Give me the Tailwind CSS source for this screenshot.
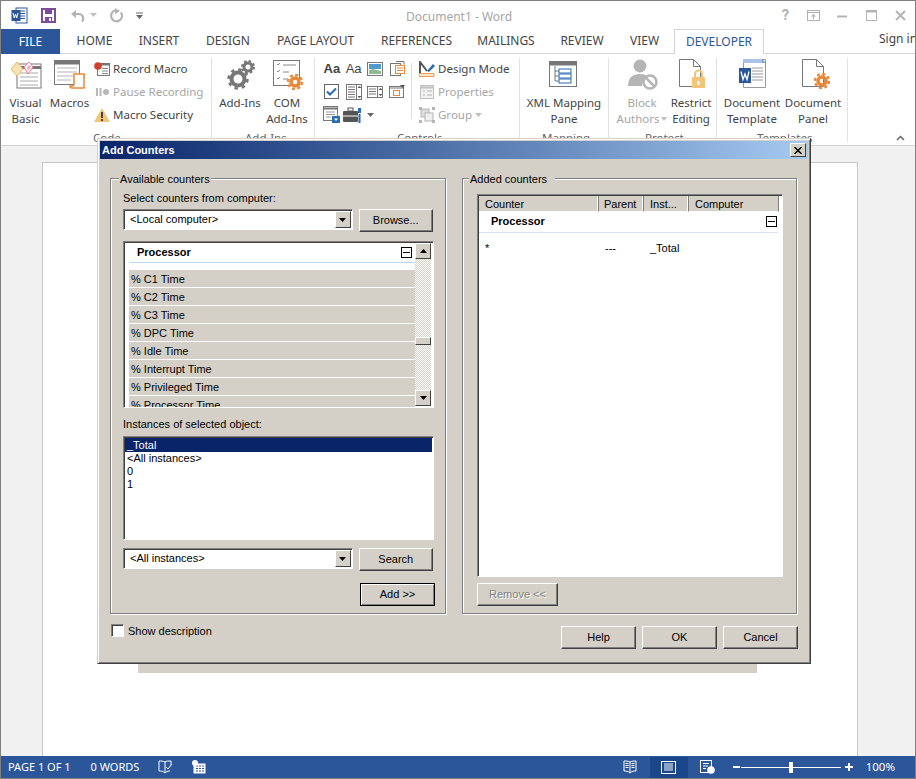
<!doctype html>
<html lang="en">
<head>
<meta charset="UTF-8">
<script src="https://cdn.jsdelivr.net/npm/@tailwindcss/browser@4"></script>
<title>Document1 - Word</title>
</head>
<body class="bg-white">
<div class="relative w-[916px] h-[779px] overflow-hidden flex flex-col border border-[#808080] font-['Roboto',sans-serif] text-[12px] text-[#444]">

  <!-- title bar -->
  <div class="h-[28px] flex items-center shrink-0 relative">
    <svg class="ml-[10px]" width="17" height="17" viewBox="0 0 17 17"><rect x="5" y="1" width="11" height="15" fill="#fff" stroke="#2b579a"/><path d="M9 4h5M9 6.500h5M9 9h5M9 11.500h5" stroke="#2b579a"/><rect x="0.500" y="3" width="9" height="11" fill="#2b579a"/><path d="M2 6l1.300 5 1.200-4 1.200 4L7 6" fill="none" stroke="#fff"/></svg>
    <svg class="ml-[13px]" width="15" height="15" viewBox="0 0 15 15"><rect x="1" y="1" width="13" height="13" fill="none" stroke="#7d4a9c" stroke-width="2"/><rect x="4" y="2" width="7" height="4" fill="#7d4a9c"/><rect x="4" y="9" width="7" height="5" fill="#7d4a9c"/><rect x="8" y="10" width="2" height="3" fill="#fff"/></svg>
    <svg class="ml-[14px]" width="16" height="15" viewBox="0 0 16 15"><path d="M2 6h7a4.500 4.500 0 0 1 3 7.500" fill="none" stroke="#b4b4b4" stroke-width="2.200"/><path d="M1 6l5-4v8z" fill="#b4b4b4"/></svg>
    <svg class="ml-[4px]" width="7" height="4" viewBox="0 0 7 4"><path d="M0 0h7L3.500 4z" fill="#c0c0c0"/></svg>
    <svg class="ml-[12px]" width="15" height="15" viewBox="0 0 15 15"><path d="M6 2.500a5.500 5.500 0 1 0 6 2" fill="none" stroke="#b4b4b4" stroke-width="2.200"/><path d="M6 0v6l5-3z" fill="#b4b4b4"/></svg>
    <svg class="ml-[12px]" width="7" height="7" viewBox="0 0 7 7"><path d="M0 1h7" stroke="#666"/><path d="M0 3h7L3.500 7z" fill="#666"/></svg>
    <span class="absolute left-[405px] top-[7px] text-[#a6a6a6] font-['Noto_Sans']">Document1 - Word</span>
    <div class="ml-auto mr-[9px] flex items-center gap-[14px]">
      <span class="w-[15px] text-center text-[15px] font-bold text-[#b4b4b4]">?</span>
      <svg width="13" height="11" viewBox="0 0 13 11"><rect x="0.500" y="0.500" width="12" height="10" fill="none" stroke="#b0b0b0"/><path d="M0 2.500h13" stroke="#b0b0b0"/><path d="M6.500 4l2.500 2.500H7V9H6V6.500H4z" fill="#b0b0b0"/></svg>
      <svg class="ml-[3px]" width="10" height="10" viewBox="0 0 10 10"><path d="M0 6.500h10" stroke="#b4b4b4" stroke-width="2"/></svg>
      <svg class="ml-[5px]" width="11" height="11" viewBox="0 0 11 11"><rect x="0.500" y="0.500" width="10" height="10" fill="none" stroke="#b4b4b4"/><path d="M0 1.500h11" stroke="#b4b4b4" stroke-width="2"/></svg>
      <svg class="ml-[4px]" width="11" height="11" viewBox="0 0 11 11"><path d="M1 1l9 9M10 1l-9 9" stroke="#b4b4b4" stroke-width="2"/></svg>
    </div>
  </div>

  <!-- tabs -->
  <div class="h-[25px] flex shrink-0 border-b border-[#d4d4d4] font-['Noto_Sans'] text-[#444] text-[12px]">
    <div class="w-[59px] h-[25px] bg-[#2b579a] text-white flex items-center justify-center">FILE</div>
    <div class="w-[69px] flex items-center justify-center">HOME</div>
    <div class="w-[60px] flex items-center justify-center">INSERT</div>
    <div class="w-[78px] flex items-center justify-center">DESIGN</div>
    <div class="w-[97px] flex items-center justify-center">PAGE LAYOUT</div>
    <div class="w-[105px] flex items-center justify-center">REFERENCES</div>
    <div class="w-[74px] flex items-center justify-center">MAILINGS</div>
    <div class="w-[78px] flex items-center justify-center">REVIEW</div>
    <div class="w-[47px] flex items-center justify-center">VIEW</div>
    <div class="ml-[6px] w-[90px] h-[25px] bg-white border border-b-0 border-[#d4d4d4] text-[#2b579a] flex items-center justify-center">DEVELOPER</div>
    <div class="ml-auto pb-[5px] self-center whitespace-nowrap w-[36px] overflow-hidden">Sign in</div>
  </div>

  <!-- ribbon -->
  <div class="h-[92px] flex shrink-0 border-b border-[#d4d4d4] relative font-['Noto_Sans'] text-[11.5px] leading-[16px]">
    <!-- Code -->
    <div class="w-[211px] h-[84px] mt-[4px] border-r border-[#e1e1e1] flex">
      <div class="w-[49px] flex flex-col items-center">
        <svg class="mt-[1px]" width="32" height="30" viewBox="0 0 32 30"><rect x="7" y="5" width="24" height="24" fill="#fff" stroke="#777"/><path d="M7 8.500h24" stroke="#777" stroke-width="3"/><path d="M10 14h18M10 18h18M10 22h18M10 26h18" stroke="#aaa"/><path d="M1 10l6-7 6 7-6 7z" fill="#f8e3b4" stroke="#e8b864"/><path d="M14 8l5-5 4 5-5 7z" fill="#fff" stroke="#e57a98"/><path d="M17 8l2-2 2 2-3 4z" fill="#f3a9bc"/></svg>
        <div class="mt-[6px] text-center">Visual<br>Basic</div>
      </div>
      <div class="w-[39px] flex flex-col items-center">
        <svg class="mt-[1px]" width="32" height="30" viewBox="0 0 32 30"><rect x="0.500" y="1.500" width="25" height="24" fill="#fff" stroke="#777"/><path d="M0 3.500h26" stroke="#777" stroke-width="4"/><path d="M3 9h20M3 13h20M3 17h20M3 21h14" stroke="#b5b5b5"/><path d="M20 15h10v14H18c-1 0-2-1-2-2h3c1 0 1-1 1-2z" fill="#fff" stroke="#e8893a" stroke-width="1.500"/><path d="M30 15c1 0 1 3 0 3" fill="none" stroke="#e8893a"/></svg>
        <div class="mt-[6px] text-center whitespace-nowrap">Macros</div>
      </div>
      <div class="flex flex-col ml-[5px] -mt-[1px]">
        <div class="h-[23px] flex items-center gap-[3px]">
          <svg width="16" height="16" viewBox="0 0 16 16"><rect x="3.500" y="2.500" width="12" height="12" fill="#fff" stroke="#777"/><path d="M3 3.500h13" stroke="#777" stroke-width="2"/><path d="M8 7.500h6M8 10h6M8 12.500h6" stroke="#888"/><circle cx="4" cy="5" r="3.800" fill="#d0402a"/></svg>
          <span>Record Macro</span>
        </div>
        <div class="h-[23px] flex items-center gap-[3px] text-[#a6a6a6]">
          <svg width="16" height="16" viewBox="0 0 16 16"><path d="M2 4h2v8H2zM5.500 4h2v8h-2z" fill="#b8b8b8"/><circle cx="12" cy="8" r="3" fill="#b8b8b8"/></svg>
          <span>Pause Recording</span>
        </div>
        <div class="h-[23px] flex items-center gap-[3px]">
          <svg width="16" height="16" viewBox="0 0 16 16"><path d="M8 1l8 14H0z" fill="#f2c679"/><path d="M7 5h2v6H7zM7 12h2v2H7z" fill="#444"/></svg>
          <span>Macro Security</span>
        </div>
      </div>
    </div>
    <!-- Add-Ins -->
    <div class="w-[103px] h-[84px] mt-[4px] border-r border-[#e1e1e1] flex">
      <div class="w-[56px] flex flex-col items-center">
        <svg class="mt-[2px] ml-[1px]" width="28" height="30" viewBox="0 0 28 30"><circle cx="11" cy="19" r="6.500" fill="none" stroke="#777" stroke-width="4"/><circle cx="11" cy="19" r="9.500" fill="none" stroke="#777" stroke-width="2.500" stroke-dasharray="3.500 3.950"/><circle cx="21" cy="7" r="4" fill="none" stroke="#777" stroke-width="3"/><circle cx="21" cy="7" r="6" fill="none" stroke="#777" stroke-width="2" stroke-dasharray="2.500 2.200"/></svg>
        <div class="mt-[5px] text-center whitespace-nowrap">Add-Ins</div>
      </div>
      <div class="w-[38px] flex flex-col items-center">
        <svg class="mt-[1px]" width="32" height="31" viewBox="0 0 32 31"><rect x="2.500" y="1.500" width="26" height="25" fill="#fff" stroke="#777"/><path d="M6 5l1 1 2-2M6 12l1 1 2-2M6 19l1 1 2-2" fill="none" stroke="#888"/><path d="M12 6h13M12 13h6M12 20h5" stroke="#888"/><circle cx="24" cy="23" r="4" fill="none" stroke="#e8893a" stroke-width="3.500"/><circle cx="24" cy="23" r="7" fill="none" stroke="#e8893a" stroke-width="2.500" stroke-dasharray="3 2.500"/></svg>
        <div class="mt-[5px] text-center whitespace-nowrap">COM<br>Add-Ins</div>
      </div>
    </div>
    <!-- Controls -->
    <div class="w-[205px] h-[84px] mt-[4px] border-r border-[#e1e1e1] flex">
      <div class="w-[87px] grid grid-cols-4 grid-rows-3 ml-[6px] -mt-[1px] h-[69px] items-center justify-items-center">
        <span class="text-[13px] font-['Liberation_Sans'] font-bold">Aa</span>
        <span class="text-[13px] font-['Liberation_Sans']">Aa</span>
        <svg width="16" height="14" viewBox="0 0 16 14"><rect x="0.500" y="0.500" width="15" height="13" fill="#fff" stroke="#777"/><rect x="2" y="2" width="12" height="5" fill="#4f9ac8"/><path d="M2 12V8l4-1 8 2v3z" fill="#8fb98f"/></svg>
        <svg width="15" height="15" viewBox="0 0 15 15"><rect x="0.500" y="2.500" width="10" height="12" fill="#fff" stroke="#777"/><rect x="5.500" y="4.500" width="9" height="8" fill="#fff" stroke="#e8893a"/><path d="M7 7h6M7 9.500h6" stroke="#e8893a"/><path d="M6 0.500h8v3" fill="none" stroke="#777"/></svg>
        <svg width="15" height="15" viewBox="0 0 15 15"><rect x="0.500" y="0.500" width="14" height="14" fill="#fff" stroke="#666"/><path d="M3 7.500l3 3 6-6" fill="none" stroke="#2b6cb0" stroke-width="2"/></svg>
        <svg width="16" height="16" viewBox="0 0 16 16"><rect x="0.500" y="0.500" width="15" height="15" fill="#fff" stroke="#777"/><path d="M2 3h7M2 5.500h7M2 8h7M2 10.500h7M2 13h7" stroke="#777"/><path d="M10.500 0v16" stroke="#777"/><path d="M11.500 4l2-2 2 2zM11.500 12l2 2 2-2z" fill="#555"/></svg>
        <svg width="16" height="12" viewBox="0 0 16 12"><rect x="0.500" y="0.500" width="15" height="11" fill="#fff" stroke="#777"/><path d="M2 3h7M2 5.500h7M2 8h7" stroke="#777"/><path d="M10.500 0v12" stroke="#777"/><path d="M11.500 4l2-2 2 2zM11.500 8l2 2 2-2z" fill="#555"/></svg>
        <svg width="16" height="13" viewBox="0 0 16 13"><rect x="0.500" y="1.500" width="14" height="11" fill="#fff" stroke="#777"/><path d="M0 3h15" stroke="#777"/><rect x="4.500" y="5.500" width="6" height="5" fill="none" stroke="#e8893a"/><path d="M11 0h5l-2.500 3z" fill="#555"/></svg>
        <svg width="17" height="17" viewBox="0 0 17 17"><rect x="0.500" y="0.500" width="14" height="14" fill="#fff" stroke="#777"/><path d="M0 2.500h15" stroke="#777" stroke-width="2"/><path d="M3 6h9M3 8.500h9M3 11h5" stroke="#999"/><rect x="9" y="10" width="8" height="7" fill="#2b6cb0"/><path d="M11 12.500h4l-2 2.500z" fill="#fff"/></svg>
        <svg width="21" height="16" viewBox="0 0 21 16"><rect x="0" y="4" width="15" height="11" rx="1" fill="#555"/><rect x="5" y="1" width="5" height="3" fill="none" stroke="#555"/><path d="M0 9h15" stroke="#fff"/><rect x="15" y="1" width="3" height="5" fill="#2b6cb0"/><rect x="15.500" y="7" width="2" height="9" fill="#2b6cb0"/></svg>
        <svg class="-ml-[10px]" width="7" height="4" viewBox="0 0 7 4"><path d="M0 0h7L3.500 4z" fill="#666"/></svg>
      </div>
      <div class="w-px h-[56px] mt-[5px] ml-[3px] bg-[#dcdcdc]"></div>
      <div class="flex flex-col ml-[7px] -mt-[1px]">
        <div class="h-[23px] flex items-center gap-[3px] whitespace-nowrap">
          <svg width="16" height="16" viewBox="0 0 16 16"><path d="M1 12V1l7 9" fill="none" stroke="#555" stroke-width="2"/><path d="M8 10l6-7 2 2-6 6z" fill="#2b6cb0"/><path d="M0 12.500h15v3H0z" fill="#fbe5c8" stroke="#e8893a" stroke-width="0.800"/></svg>
          <span>Design Mode</span>
        </div>
        <div class="h-[23px] flex items-center gap-[3px] text-[#a6a6a6]">
          <svg width="16" height="16" viewBox="0 0 16 16"><rect x="1.500" y="1.500" width="13" height="13" fill="#f1f1f1" stroke="#c0c0c0"/><path d="M1 3.500h14" stroke="#c0c0c0" stroke-width="2"/><path d="M4 7h2M8 7h5M4 11h2M8 11h5" stroke="#b5b5b5"/></svg>
          <span>Properties</span>
        </div>
        <div class="h-[23px] flex items-center gap-[3px] text-[#a6a6a6]">
          <svg width="16" height="16" viewBox="0 0 16 16"><rect x="2" y="2" width="8" height="8" fill="#ddd" stroke="#b5b5b5"/><rect x="6" y="6" width="8" height="8" fill="#eee" stroke="#b5b5b5"/><path d="M0 0h3v3H0zM13 0h3v3h-3zM0 13h3v3H0zM13 13h3v3h-3z" fill="#b5b5b5"/></svg>
          <span>Group</span>
          <svg width="7" height="4" viewBox="0 0 7 4"><path d="M0 0h7L3.500 4z" fill="#c0c0c0"/></svg>
        </div>
      </div>
    </div>
    <!-- Mapping -->
    <div class="w-[89px] h-[84px] mt-[4px] border-r border-[#e1e1e1] flex flex-col items-center">
      <svg class="mt-[1px]" width="30" height="30" viewBox="0 0 30 30"><rect x="0.500" y="2.500" width="27" height="25" fill="#fff" stroke="#777"/><path d="M0 4.500h28" stroke="#777" stroke-width="4"/><path d="M6 7v15h4M6 12h4M6 17h4" fill="none" stroke="#777"/><rect x="10" y="10" width="12" height="4" fill="#fff" stroke="#2b6cb0"/><rect x="10" y="15" width="12" height="4" fill="#fff" stroke="#2b6cb0"/><rect x="10" y="20" width="12" height="4" fill="#fff" stroke="#2b6cb0"/></svg>
      <div class="mt-[6px] text-center whitespace-nowrap">XML Mapping<br>Pane</div>
    </div>
    <!-- Protect -->
    <div class="w-[108px] h-[84px] mt-[4px] border-r border-[#e1e1e1] flex text-center">
      <div class="w-[66px] flex flex-col items-center text-[#a6a6a6]">
        <svg class="mt-[1px] ml-[1px]" width="32" height="31" viewBox="0 0 32 31"><circle cx="13" cy="7" r="6.500" fill="#b5b5b5"/><path d="M1 27c0-8 4-12 12-12 4 0 6 1 8 3-4 2-6 5-6 9z" fill="#b5b5b5"/><circle cx="23" cy="23" r="6.500" fill="#fff" stroke="#b5b5b5" stroke-width="2.500"/><path d="M18.500 18.500l9 9" stroke="#b5b5b5" stroke-width="2.500"/></svg>
        <div class="mt-[5px] whitespace-nowrap">Block<br><span class="inline-flex items-center gap-[2px]">Authors<svg width="6" height="4" viewBox="0 0 6 4"><path d="M0 0h6L3 4z" fill="#c0c0c0"/></svg></span></div>
      </div>
      <div class="w-[32px] flex flex-col items-center">
        <svg class="mt-[1px] ml-[3px]" width="28" height="31" viewBox="0 0 28 31"><path d="M0.500 0.500h14l7 7v20H0.500z" fill="#fff" stroke="#777"/><path d="M14.500 0.500v7h7" fill="none" stroke="#777"/><rect x="13" y="18" width="13" height="11" rx="1" fill="#f2c679"/><path d="M16 18v-3a3.500 3.500 0 0 1 7 0v3" fill="none" stroke="#f2c679" stroke-width="2"/><rect x="18.500" y="22" width="2" height="4" fill="#fff"/></svg>
        <div class="mt-[5px] whitespace-nowrap">Restrict<br>Editing</div>
      </div>
    </div>
    <!-- Templates -->
    <div class="w-[131px] h-[84px] mt-[4px] border-r border-[#e1e1e1] flex text-center">
      <div class="w-[70px] flex flex-col items-center">
        <svg class="mt-[1px] ml-[2px]" width="28" height="30" viewBox="0 0 28 30"><path d="M4.500 0.500h22v28h-22z" fill="#fff" stroke="#999"/><path d="M4 0h19v4H4z" fill="#a9c3e6"/><path d="M23 0l4 4h-4z" fill="#7f9fcf"/><path d="M13 9h11M13 12h11M13 15h11M13 18h11M13 21h11" stroke="#999"/><rect x="0" y="9" width="12" height="15" fill="#2b579a"/><path d="M2 12.500l2 8 2-5.500 2 5.500 2-8" fill="none" stroke="#fff" stroke-width="1.300"/></svg>
        <div class="mt-[6px] whitespace-nowrap">Document<br>Template</div>
      </div>
      <div class="w-[52px] flex flex-col items-center">
        <svg class="mt-[1px] ml-[5px]" width="28" height="31" viewBox="0 0 28 31"><path d="M0.500 0.500h14l7 7v20H0.500z" fill="#fff" stroke="#777"/><path d="M14.500 0.500v7h7" fill="none" stroke="#777"/><circle cx="20" cy="22" r="4" fill="none" stroke="#e8893a" stroke-width="3.500"/><circle cx="20" cy="22" r="7" fill="none" stroke="#e8893a" stroke-width="2.500" stroke-dasharray="3 2.500"/></svg>
        <div class="mt-[5px] whitespace-nowrap">Document<br>Panel</div>
      </div>
    </div>
    <svg class="absolute left-[895px] top-[81px]" width="9" height="6" viewBox="0 0 9 6"><path d="M1 5l3.500-3.500L8 5" fill="none" stroke="#666" stroke-width="1.500"/></svg>
    <span class="absolute left-[92px] top-[76px] text-[#666]">Code</span>
    <span class="absolute left-[244px] top-[76px] text-[#666]">Add-Ins</span>
    <span class="absolute left-[396px] top-[76px] text-[#666]">Controls</span>
    <span class="absolute left-[541px] top-[76px] text-[#666]">Mapping</span>
    <span class="absolute left-[644px] top-[76px] text-[#666]">Protect</span>
    <span class="absolute left-[756px] top-[76px] text-[#666]">Templates</span>
  </div>

  <!-- document area -->
  <div class="flex-1 bg-[#f1f1f1] pl-[41px] pt-[16px] overflow-hidden">
    <div class="w-[816px] h-full bg-white border border-b-0 border-[#c6c6c6]"></div>
  </div>

  <!-- status bar -->
  <div class="h-[22px] bg-[#2b579a] text-white shrink-0 flex items-center font-['Noto_Sans'] text-[11px]">
    <span class="ml-[7px]">PAGE 1 OF 1</span>
    <span class="ml-[20px]">0 WORDS</span>
    <svg class="ml-[19px]" width="15" height="14" viewBox="0 0 15 14"><path d="M7 2C5 1 3 1 1 1v10c2 0 4 0 6 2V2zM7 2c1-1 3-1 6-1v4M7 13c1-1 2-2 5-2" fill="none" stroke="#fff"/><path d="M8 7l2 2 4-5" fill="none" stroke="#fff"/></svg>
    <svg class="ml-[19px]" width="14" height="14" viewBox="0 0 14 14"><rect x="1.500" y="3.500" width="12" height="10" fill="#fff"/><path d="M4 6h8M4 8.500h8M4 11h8" stroke="#2b579a" stroke-dasharray="2 1"/><circle cx="3" cy="3" r="3" fill="#fff"/></svg>
    <div class="ml-auto flex items-center">
      <svg width="14" height="14" viewBox="0 0 14 14" class="mr-[13px]"><path d="M7 2C5 1 3 1 1 1v10c2 0 4 0 6 2 2-2 4-2 6-2V1c-2 0-4 0-6 1zM7 2v11M2.500 3.500h3M2.500 5.500h3M2.500 7.500h3M8.500 3.500h3M8.500 5.500h3M8.500 7.500h3" fill="none" stroke="#fff"/></svg>
      <div class="w-[38px] h-[21px] bg-[#19478a] flex items-center justify-center mr-[12px]">
        <svg width="15" height="13" viewBox="0 0 15 13"><rect x="0.500" y="0.500" width="14" height="12" fill="none" stroke="#fff"/><path d="M3 3h9M3 5h9M3 7h9M3 9h9" stroke="#fff"/></svg>
      </div>
      <svg width="15" height="14" viewBox="0 0 15 14"><rect x="0.500" y="0.500" width="11" height="12" fill="none" stroke="#fff"/><path d="M3 3.500h6M3 6h5M3 8.500h3" stroke="#fff"/><circle cx="11" cy="10" r="3.800" fill="#fff"/></svg>
      <div class="ml-[18px] w-[7px] h-[2px] bg-white"></div>
      <div class="ml-[1px] relative w-[100px] h-[1px] bg-white">
        <div class="absolute left-[48px] -top-[5px] w-[4px] h-[11px] bg-white"></div>
      </div>
      <div class="ml-[4px] relative w-[8px] h-[8px]">
        <div class="absolute left-0 top-[3px] w-[8px] h-[2px] bg-white"></div>
        <div class="absolute left-[3px] top-0 w-[2px] h-[8px] bg-white"></div>
      </div>
      <span class="ml-[13px] mr-[20px] text-[11.5px]">100%</span>
    </div>
  </div>

  <!-- band under the dialog -->
  <div class="absolute left-[137px] top-[200px] w-[619px] h-[472px] bg-[#d4d0c8]"></div>

  <!-- Add Counters dialog -->
  <div class="absolute left-[96px] top-[137px] w-[714px] h-[526px] bg-[#d4d0c8] border border-t-[#d4d0c8] border-l-[#d4d0c8] border-r-[#404040] border-b-[#404040] shadow-[inset_1px_1px_0_#fff,inset_-1px_-1px_0_#808080] p-[2px] font-['Liberation_Sans'] text-[11px] text-black leading-[13px]">
    <div class="h-[18px] flex items-center justify-between pl-[2px] pr-[2px] bg-gradient-to-r from-[#0a246a] to-[#a6caf0]">
      <span class="text-white font-bold">Add Counters</span>
      <div class="w-[16px] h-[14px] bg-[#d4d0c8] border border-t-white border-l-white border-r-[#404040] border-b-[#404040] flex items-center justify-center">
        <svg width="8" height="7" viewBox="0 0 8 7"><path d="M0.500 0l7 7M7.500 0l-7 7" stroke="#000" stroke-width="1.500"/></svg>
      </div>
    </div>

    <div class="flex gap-[16px] pl-[10px] pt-[19px]">
      <!-- left group -->
      <div class="relative w-[336px] h-[436px] border border-[#808080] shadow-[1px_1px_0_#fff,inset_1px_1px_0_#fff] px-[12px] pt-[13px]">
        <span class="absolute left-[8px] -top-[6px] bg-[#d4d0c8] px-[1px]">Available counters</span>
        <div>Select counters from computer:</div>
        <div class="mt-[4px] flex gap-[6px]">
          <div class="w-[231px] h-[21px] bg-white border border-t-[#808080] border-l-[#808080] border-r-white border-b-white shadow-[inset_1px_1px_0_#404040] flex items-center justify-between pl-[6px] pr-[1px]">
            <span>&lt;Local computer&gt;</span>
            <div class="w-[16px] h-[17px] bg-[#d4d0c8] border border-t-white border-l-white border-r-[#404040] border-b-[#404040] flex items-center justify-center"><svg width="7" height="4" viewBox="0 0 7 4"><path d="M0 0h7L3.500 4z" fill="#000"/></svg></div>
          </div>
          <div class="w-[75px] h-[23px] border border-t-white border-l-white border-r-[#404040] border-b-[#404040] shadow-[inset_-1px_-1px_0_#808080] flex items-center justify-center">Browse...</div>
        </div>

        <div class="mt-[9px] w-[311px] h-[167px] bg-white border border-t-[#808080] border-l-[#808080] border-r-white border-b-white shadow-[inset_1px_1px_0_#404040] flex overflow-hidden">
          <div class="w-[291px] h-full pl-[5px] pt-[1px] overflow-hidden">
            <div class="h-[20px] flex items-center justify-between pl-[8px] pr-[3px] border-b border-[#bcd7f2] font-bold">
              <span>Processor</span>
              <div class="w-[11px] h-[11px] border border-black flex items-center justify-center"><div class="w-[7px] h-px bg-black"></div></div>
            </div>
            <div class="pt-[7px]">
              <div class="h-[18px] bg-[#d4d0c8] border-b border-white pl-[2px] pt-[2px] flex items-center">% C1 Time</div>
              <div class="h-[18px] bg-[#d4d0c8] border-b border-white pl-[2px] pt-[2px] flex items-center">% C2 Time</div>
              <div class="h-[18px] bg-[#d4d0c8] border-b border-white pl-[2px] pt-[2px] flex items-center">% C3 Time</div>
              <div class="h-[18px] bg-[#d4d0c8] border-b border-white pl-[2px] pt-[2px] flex items-center">% DPC Time</div>
              <div class="h-[18px] bg-[#d4d0c8] border-b border-white pl-[2px] pt-[2px] flex items-center">% Idle Time</div>
              <div class="h-[18px] bg-[#d4d0c8] border-b border-white pl-[2px] pt-[2px] flex items-center">% Interrupt Time</div>
              <div class="h-[18px] bg-[#d4d0c8] border-b border-white pl-[2px] pt-[2px] flex items-center">% Privileged Time</div>
              <div class="h-[18px] bg-[#d4d0c8] border-b border-white pl-[2px] pt-[2px] flex items-center">% Processor Time</div>
            </div>
          </div>
          <div class="w-[16px] flex flex-col mt-[1px] mb-[1px] bg-[repeating-conic-gradient(#d4d0c8_0_25%,#fff_0_50%)] bg-[length:2px_2px]">
            <div class="h-[16px] bg-[#d4d0c8] border border-t-white border-l-white border-r-[#404040] border-b-[#404040] flex items-center justify-center"><svg width="7" height="4" viewBox="0 0 7 4"><path d="M0 4h7L3.500 0z" fill="#000"/></svg></div>
            <div class="mt-[78px] h-[8px] bg-[#d4d0c8] border border-t-white border-l-white border-r-[#404040] border-b-[#404040]"></div>
            <div class="mt-auto h-[16px] bg-[#d4d0c8] border border-t-white border-l-white border-r-[#404040] border-b-[#404040] flex items-center justify-center"><svg width="7" height="4" viewBox="0 0 7 4"><path d="M0 0h7L3.500 4z" fill="#000"/></svg></div>
          </div>
        </div>

        <div class="mt-[10px]">Instances of selected object:</div>
        <div class="mt-[5px] w-[311px] h-[104px] bg-white border border-t-[#808080] border-l-[#808080] border-r-white border-b-white shadow-[inset_1px_1px_0_#404040] pl-[1px] pr-[1px] pt-[1px]">
          <div class="h-[14px] bg-[#0a246a] text-white pl-[2px] pt-[1px]">_Total</div>
          <div class="h-[13px] pl-[2px]">&lt;All instances&gt;</div>
          <div class="h-[13px] pl-[2px]">0</div>
          <div class="h-[13px] pl-[2px]">1</div>
        </div>
        <div class="mt-[8px] flex gap-[6px]">
          <div class="w-[231px] h-[21px] bg-white border border-t-[#808080] border-l-[#808080] border-r-white border-b-white shadow-[inset_1px_1px_0_#404040] flex items-center justify-between pl-[6px] pr-[1px]">
            <span>&lt;All instances&gt;</span>
            <div class="w-[16px] h-[17px] bg-[#d4d0c8] border border-t-white border-l-white border-r-[#404040] border-b-[#404040] flex items-center justify-center"><svg width="7" height="4" viewBox="0 0 7 4"><path d="M0 0h7L3.500 4z" fill="#000"/></svg></div>
          </div>
          <div class="w-[75px] h-[23px] border border-t-white border-l-white border-r-[#404040] border-b-[#404040] shadow-[inset_-1px_-1px_0_#808080] flex items-center justify-center">Search</div>
        </div>
        <div class="mt-[12px] ml-[237px] w-[75px] h-[23px] border border-black shadow-[inset_1px_1px_0_#fff,inset_-1px_-1px_0_#808080] flex items-center justify-center">Add &gt;&gt;</div>
      </div>

      <!-- right group -->
      <div class="relative w-[335px] h-[436px] border border-[#808080] shadow-[1px_1px_0_#fff,inset_1px_1px_0_#fff] px-[14px] pt-[15px]">
        <span class="absolute left-[6px] -top-[6px] bg-[#d4d0c8] pl-[1px] pr-[8px]">Added counters</span>
        <div class="w-[306px] h-[383px] bg-white border border-t-[#808080] border-l-[#808080] border-r-white border-b-white shadow-[inset_1px_1px_0_#404040] pl-[1px] pt-[1px]">
          <div class="h-[16px] flex bg-[#d4d0c8] w-[300px]">
            <div class="w-[120px] pl-[6px] pt-[2px] border-r border-b border-r-[#808080] border-b-white flex items-center shadow-[inset_-1px_0_0_#fff]">Counter</div>
            <div class="w-[45px] pl-[5px] pt-[2px] border-r border-b border-r-[#808080] border-b-white flex items-center shadow-[inset_-1px_0_0_#fff]">Parent</div>
            <div class="w-[45px] pl-[6px] pt-[2px] border-r border-b border-r-[#808080] border-b-white flex items-center shadow-[inset_-1px_0_0_#fff] whitespace-nowrap">Inst...</div>
            <div class="w-[90px] pl-[6px] pt-[2px] border-r border-b border-r-[#808080] border-b-white flex items-center">Computer</div>
          </div>
          <div class="h-[21px] flex items-center justify-between pl-[12px] pr-[1px] pb-[2px] font-bold border-b border-[#d8e6f4] w-[299px]">
            <span>Processor</span>
            <div class="w-[11px] h-[11px] border border-black flex items-center justify-center"><div class="w-[7px] h-px bg-black"></div></div>
          </div>
          <div class="mt-[9px] flex">
            <div class="w-[120px] pl-[6px]">*</div>
            <div class="w-[45px] pl-[6px]">---</div>
            <div class="w-[90px] pl-[6px]">_Total</div>
          </div>
        </div>
        <div class="mt-[6px] w-[81px] h-[23px] border border-t-white border-l-white border-r-[#404040] border-b-[#404040] shadow-[inset_-1px_-1px_0_#808080] flex items-center justify-center text-[#808080] [text-shadow:1px_1px_0_#fff]">Remove &lt;&lt;</div>
      </div>
    </div>

    <!-- dialog footer -->
    <div class="flex items-start pl-[11px] mt-[10px] pr-[10px]">
      <div class="w-[13px] h-[13px] bg-white border border-t-[#808080] border-l-[#808080] border-r-white border-b-white shadow-[inset_1px_1px_0_#404040]"></div>
      <span class="ml-[4px] mt-[1px]">Show description</span>
      <div class="ml-auto flex gap-[6px] mt-[2px]">
        <div class="w-[75px] h-[23px] border border-t-white border-l-white border-r-[#404040] border-b-[#404040] shadow-[inset_-1px_-1px_0_#808080] flex items-center justify-center">Help</div>
        <div class="w-[75px] h-[23px] border border-t-white border-l-white border-r-[#404040] border-b-[#404040] shadow-[inset_-1px_-1px_0_#808080] flex items-center justify-center">OK</div>
        <div class="w-[75px] h-[23px] border border-t-white border-l-white border-r-[#404040] border-b-[#404040] shadow-[inset_-1px_-1px_0_#808080] flex items-center justify-center">Cancel</div>
      </div>
    </div>
  </div>
</div>
</body>
</html>
